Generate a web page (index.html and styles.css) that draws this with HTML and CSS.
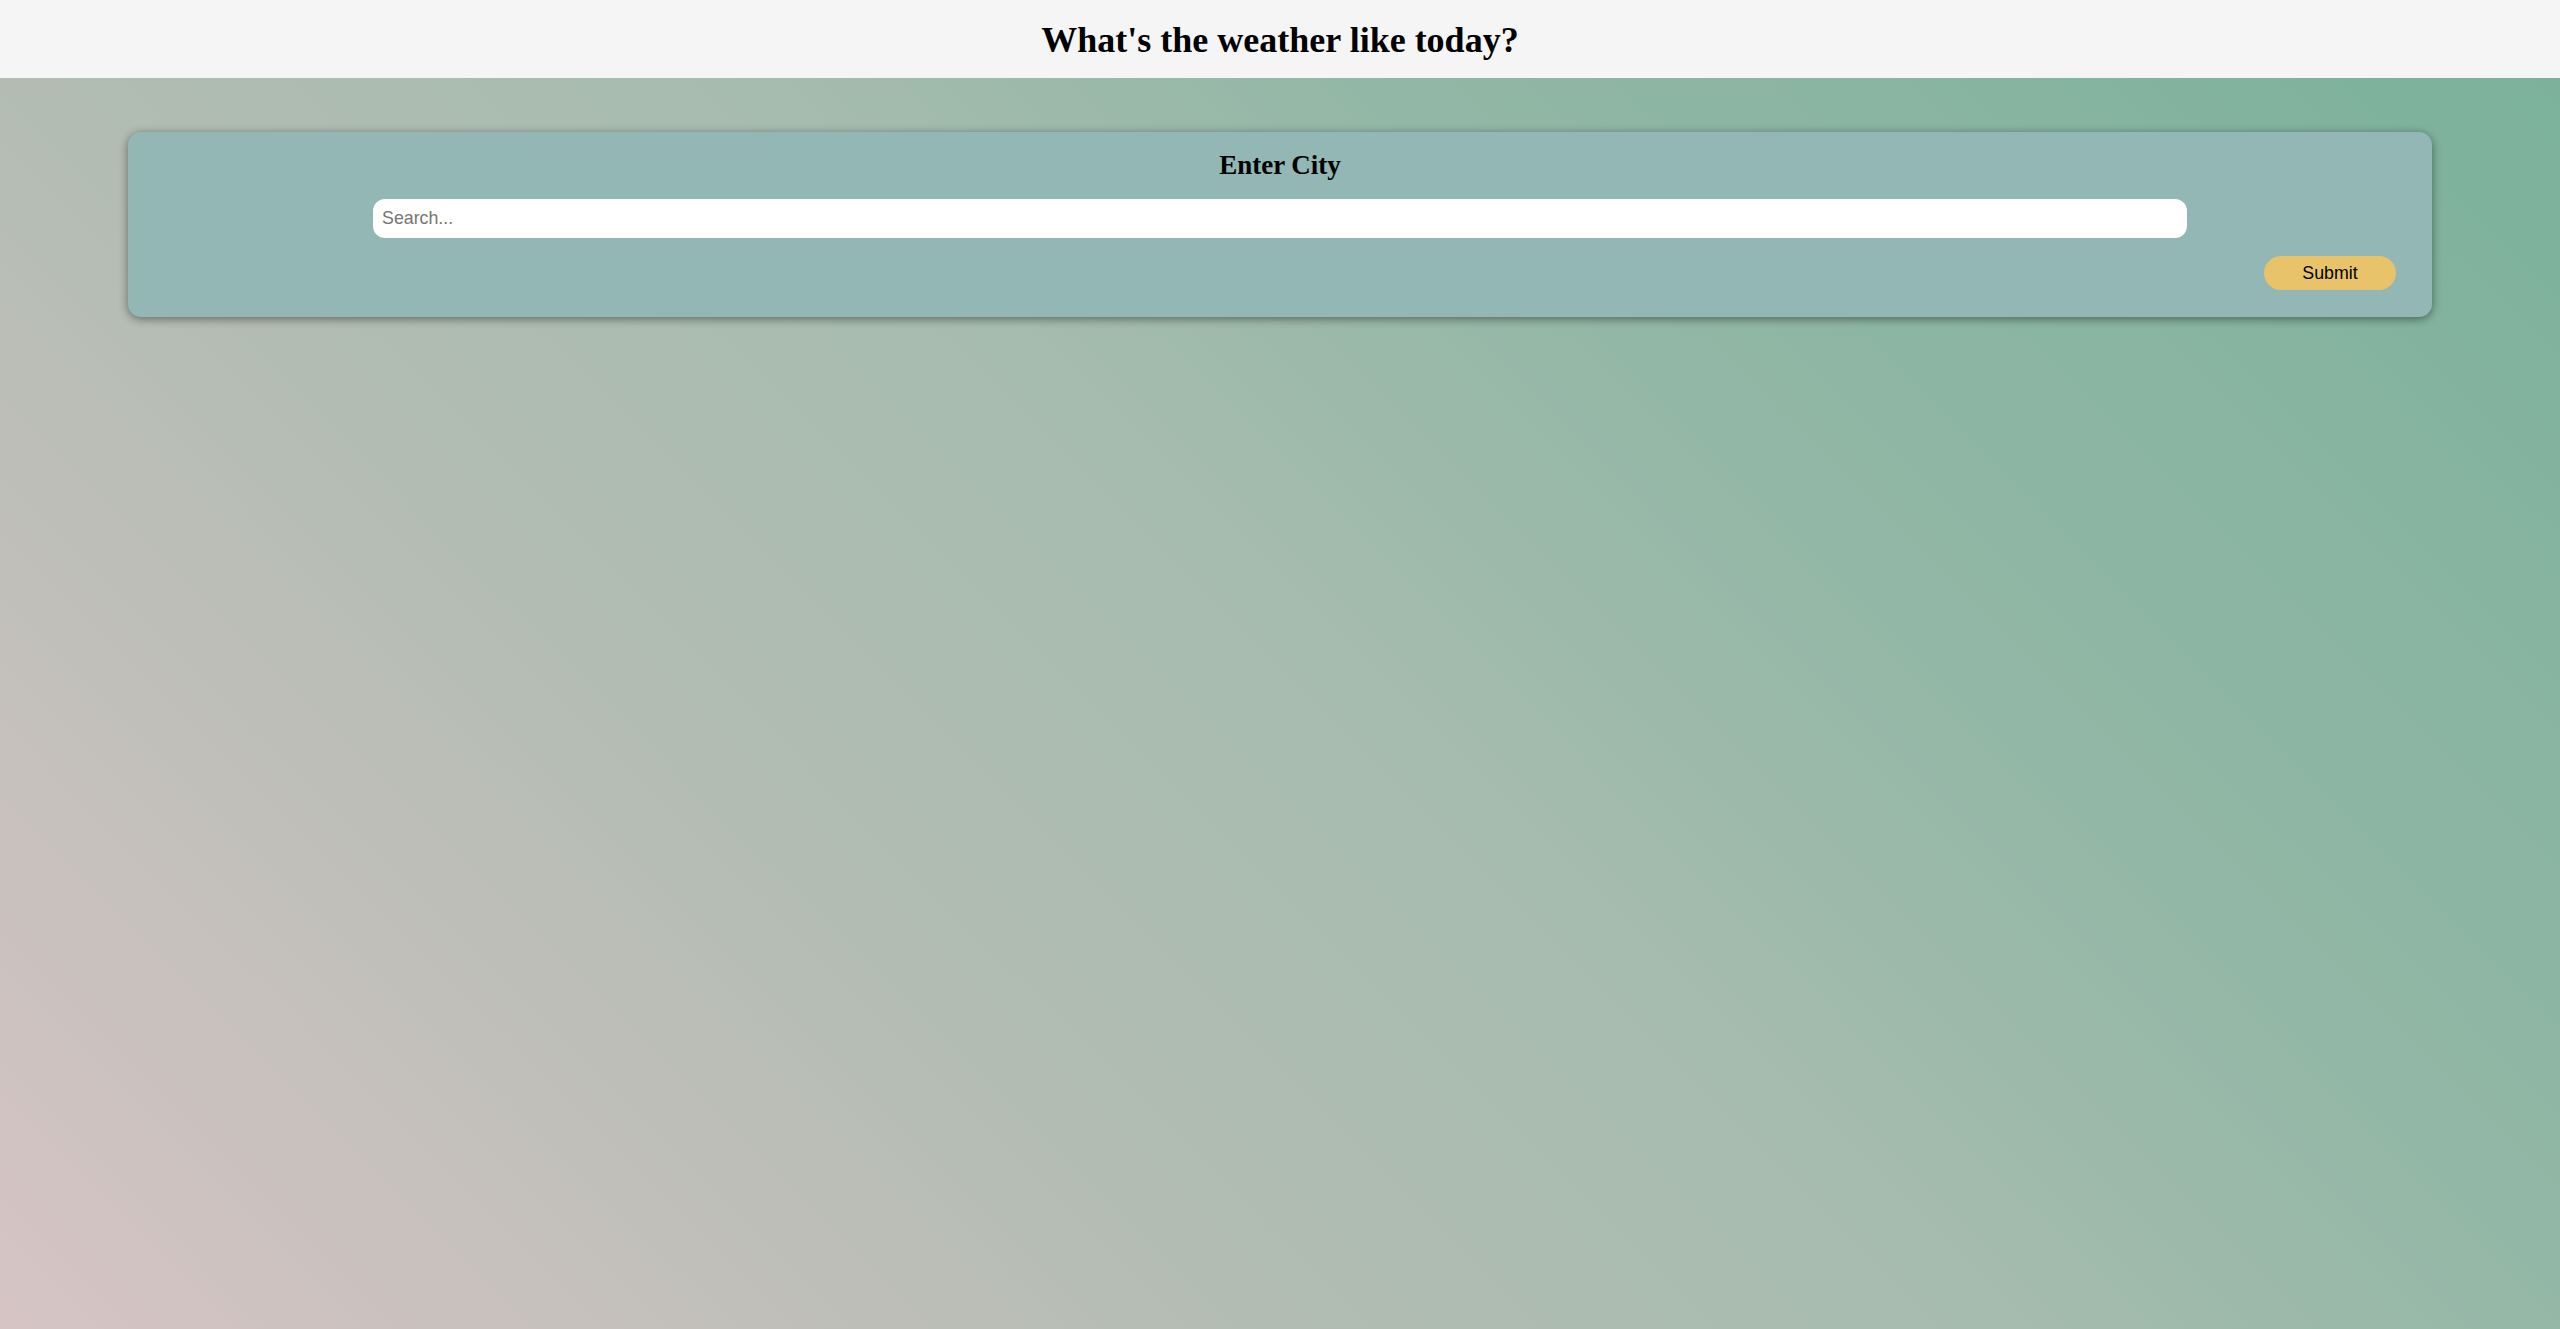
FILE: index.html
```html
<!DOCTYPE html>
<html lang="en">
<head>
<meta charset="utf-8">
<title>Weather</title>
<link rel="stylesheet" href="styles.css">
</head>
<body>
<header class="top-bar">
  <h1 class="title">What's the weather like today?</h1>
</header>
<main class="main">
  <section class="card">
    <h2 class="card-title">Enter City</h2>
    <input class="search" type="text" placeholder="Search...">
    <div class="actions">
      <button class="submit" type="button">Submit</button>
    </div>
  </section>
</main>
</body>
</html>
```
FILE: styles.css
```css
html, body {
  margin: 0;
  padding: 0;
  min-height: 100%;
}
body {
  min-height: 100vh;
  font-family: "Liberation Serif", "Times New Roman", serif;
  background: linear-gradient(45deg, #d6c4c4 0%, #b2bcb2 33%, #a7bcaf 50%, #93b7a6 67%, #7ab19b 100%);
}
.top-bar {
  height: 78px;
  background: #f5f5f5;
  display: flex;
  align-items: center;
  justify-content: center;
}
.title {
  margin: 0;
  font-size: 36px;
  font-weight: bold;
  color: #000;
  padding-top: 2px;
}
.main {
  padding-top: 54px;
}
.card {
  width: 90%;
  margin: 0 auto;
  box-sizing: border-box;
  height: 185px;
  padding: 18px 36px 0;
  background: #93b7b4;
  border-radius: 13px;
  box-shadow: 0 2px 10px rgba(0, 0, 0, 0.45);
}
.card-title {
  margin: 0;
  text-align: center;
  font-size: 27px;
  line-height: 30px;
  font-weight: bold;
  color: #000;
}
.search {
  display: block;
  box-sizing: border-box;
  width: 81.27%;
  height: 39px;
  margin: 19px auto 0;
  padding: 0 9px;
  border: none;
  border-radius: 12px;
  background: #fff;
  font-family: "Liberation Sans", Arial, sans-serif;
  font-size: 17.8px;
  color: #000;
  outline: none;
}
.search::placeholder {
  color: #757575;
}
.actions {
  display: flex;
  justify-content: flex-end;
  margin-top: 18px;
}
.submit {
  width: 132px;
  height: 34px;
  border: none;
  border-radius: 17px;
  background: #e8c36a;
  font-family: "Liberation Sans", Arial, sans-serif;
  font-size: 17.8px;
  color: #000;
  padding: 0;
  cursor: pointer;
}
```
